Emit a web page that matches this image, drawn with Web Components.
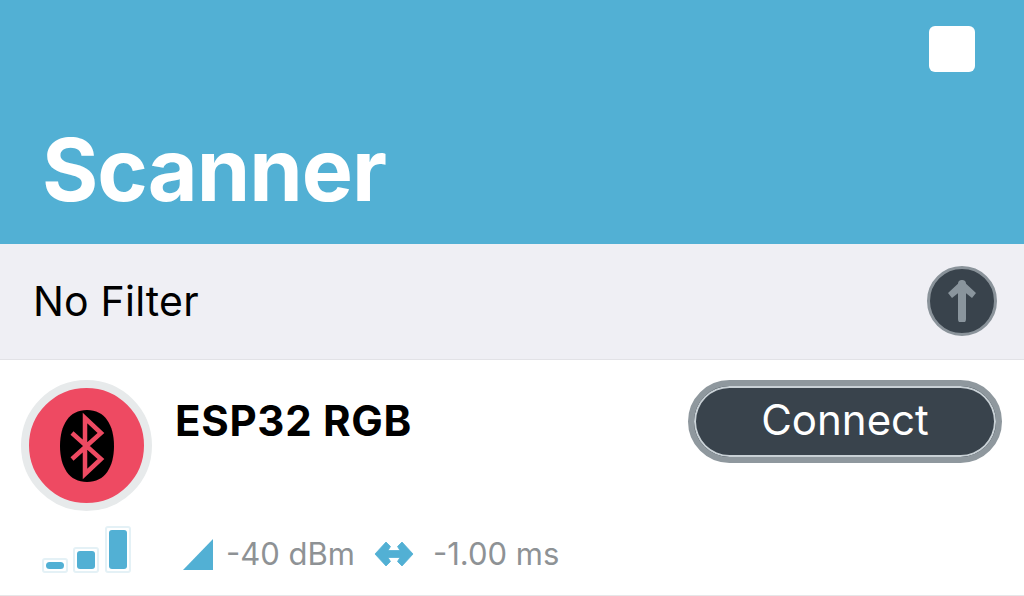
<!DOCTYPE html>
<html><head><meta charset="utf-8">
<style>
html,body{margin:0;padding:0;background:#fff}
body{width:1024px;height:596px;overflow:hidden;font-family:Inter,"Liberation Sans",sans-serif}
</style></head><body>
<scanner-header>Scanner</scanner-header>
<filter-bar>No Filter</filter-bar>
<device-row name="ESP32 RGB" rssi="-40 dBm" interval="-1.00 ms"></device-row>
<script>
function def(tag,html){customElements.define(tag,class extends HTMLElement{constructor(){super();const r=this.attachShadow({mode:'open'});r.innerHTML=html;}});}
def('scanner-header',`<style>
:host{display:flex;flex-direction:column;box-sizing:border-box;height:244px;background:#52b0d4;padding:26px 49px 0 42px;color:#fff}
.sq{align-self:flex-end;width:46px;height:46px;border-radius:6px;background:#fff}
h1{margin:49px 0 0;font:700 86px/98px Inter,"Liberation Sans",sans-serif;letter-spacing:-1px}
</style><div class="sq"></div><h1><slot></slot></h1>`);
def('filter-bar',`<style>
:host{display:flex;align-items:center;justify-content:space-between;box-sizing:border-box;height:116px;background:#efeff4;border-bottom:1px solid #e2e2e6;padding:0 27px 2px 33px;color:#000;font:400 41px/46px Inter,"Liberation Sans",sans-serif;letter-spacing:.2px}
.c{width:70px;height:70px;box-sizing:border-box;border-radius:50%;background:#39434c;border:3px solid #8a939a;display:flex;align-items:center;justify-content:center}
</style><span><slot></slot></span><div class="c"><svg width="30" height="42" viewBox="0 0 30 42"><path d="M15 4V39" stroke="#8a959d" stroke-width="8" stroke-linecap="round" fill="none"/><path d="M15 0L29 13L25 18L15 10L5 18L1 13Z" fill="#8a959d"/></svg></div>`);
def('signal-bars',`<style>
:host{display:flex;align-items:flex-end;gap:5px}
.b{box-sizing:border-box;width:26px;border:2px solid #e4f1f6;border-radius:3px;padding:2px;display:flex;align-items:flex-end}
.b i{display:block;width:100%;height:100%;background:#52b0d4;border-radius:3px}
.a{height:15px}.a i{border-radius:5px}.m{height:26px}.h{height:47px;margin-left:1px}
</style><div class="b a"><i></i></div><div class="b m"><i></i></div><div class="b h"><i></i></div>`);
customElements.define('device-row',class extends HTMLElement{constructor(){super();const g=n=>this.getAttribute(n);this.attachShadow({mode:'open'}).innerHTML=`<style>
:host{display:grid;grid-template-columns:131px 1fr 314px;grid-template-rows:131px auto;column-gap:23px;box-sizing:border-box;height:236px;padding:20px 22px 0 21px;border-bottom:1px solid #e6e6e8;background:#fff}
.av{width:131px;height:131px;box-sizing:border-box;border-radius:50%;border:8px solid #e7eaeb;background:#ee4a62;display:flex;align-items:center;justify-content:center}
.name{font:700 42px/44px Inter,"Liberation Sans",sans-serif;color:#000;padding-top:19px;letter-spacing:.7px}
.btn{height:83px;box-sizing:border-box;border-radius:42px;border:6px solid #8f989e;background:#39434c;box-shadow:inset 0 0 0 2px #c9d1d6;color:#fff;font:400 42px/68px Inter,"Liberation Sans",sans-serif;text-align:center}
.foot{grid-column:1/4;display:flex;align-items:flex-end;height:60px;margin-top:2px;padding-left:21px}
.foot signal-bars{margin-right:52px}
.st{display:flex;align-items:center;color:#8e9295;font:400 31px/36px Inter,"Liberation Sans",sans-serif;height:36px;margin-bottom:1px}
.st svg{flex:none}
</style>
<div class="av"><svg width="54" height="72" viewBox="0 0 54 72"><path d="M27 0C45 0 54 15 54 36C54 57 45 72 27 72C9 72 0 57 0 36C0 15 9 0 27 0Z" fill="#000"/><path d="M12 23L41 49L25 64V8L41 23L12 49" fill="none" stroke="#ee4a62" stroke-width="4.5"/></svg></div>
<div class="name">${g('name')}</div>
<div class="btn">Connect</div>
<div class="foot"><signal-bars></signal-bars>
<div class="st"><svg width="30" height="31" viewBox="0 0 30 31" style="margin-right:13px"><path d="M30 0V31H0Z" fill="#52b0d4"/></svg><span>${g('rssi')}</span>
<svg width="40" height="26" viewBox="0 0 40 26" style="margin:0 19px 0 19px"><path d="M12 1L16.500 5.500L14 9.500H26L23.500 5.500L28 1L39 13L28 25L23.500 20.500L26 16.500H14L16.500 20.500L12 25L1 13Z" fill="#52b0d4" stroke="#52b0d4" stroke-width="0.8" stroke-linejoin="round"/></svg><span>${g('interval')}</span></div></div>`}});
</script>
</body></html>
